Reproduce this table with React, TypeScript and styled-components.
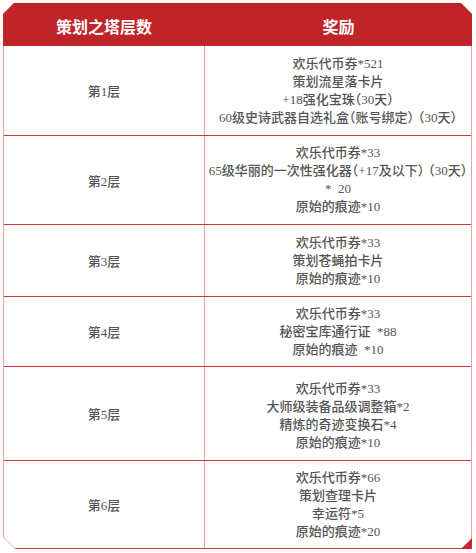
import React from 'react';
import styled, { createGlobalStyle } from 'styled-components';

const GlobalStyle = createGlobalStyle`
  html, body {
    margin: 0;
    padding: 0;
    background: #ffffff;
  }
`;

const Page = styled.div`
  padding: 3px 0 0 3px;
`;

const Frame = styled.div`
  position: relative;
  width: 469px;
  background: #e6a4a7;
  padding: 0 1px;
  box-sizing: border-box;
  clip-path: polygon(11px 0, calc(100% - 11px) 0, 100% 11px, 100% 100%, 12px 100%, 0 calc(100% - 12px), 0 11px);
  font-family: 'Liberation Serif', 'Noto Sans CJK SC', serif;

  &::after {
    content: '';
    position: absolute;
    right: 0;
    bottom: 0;
    width: 11px;
    height: 11px;
    background: #c8262c;
    clip-path: polygon(100% 0, 100% 100%, 0 100%);
  }
`;

const Header = styled.div`
  display: grid;
  grid-template-columns: 202px 1fr;
  height: 43px;
  margin: 0 -1px;
  background: #c02328;
  color: #ffffff;
  font-size: 16px;
  font-weight: 700;
  font-family: 'Noto Sans CJK SC', serif;
`;

const HeadCell = styled.div`
  display: flex;
  align-items: center;
  justify-content: center;
  padding-top: 2px;
`;

const Body = styled.div`
  background: #ffffff;
  clip-path: polygon(0 0, 100% 0, 100% 100%, 12px 100%, 0 calc(100% - 12px));
`;

const Row = styled.div<{ $h: number }>`
  display: grid;
  grid-template-columns: 201px 1fr;
  height: ${(p) => p.$h}px;
  border-bottom: 1px solid #d2363b;
`;

const FloorCell = styled.div`
  display: flex;
  align-items: center;
  justify-content: center;
  border-right: 1px solid #e6a4a7;
  color: #555555;
  font-size: 13px;
  font-weight: 500;
`;

const RewardCell = styled.div<{ $shift?: number }>`
  display: flex;
  flex-direction: column;
  align-items: center;
  justify-content: center;
  padding-top: ${(p) => p.$shift ?? 0}px;
  color: #555555;
  font-size: 13px;
  font-weight: 500;
  line-height: 18px;
  text-align: center;
  font-feature-settings: 'halt';
`;

const Line = styled.div`
  white-space: pre;
`;

const Gap = styled.span`
  display: inline-block;
  width: 4px;
`;

type Tier = { floor: string; h: number; shift?: number; rewards: React.ReactNode[] };

const tiers: Tier[] = [
  {
    floor: '第1层',
    h: 89,
    rewards: [
      '欢乐代币券*521',
      '策划流星落卡片',
      '+18强化宝珠（30天）',
      <>
        60级史诗武器自选礼盒（账号绑定）
        <Gap />
        （30天）
      </>,
    ],
  },
  {
    floor: '第2层',
    h: 88,
    rewards: [
      '欢乐代币券*33',
      <>
        65级华丽的一次性强化器（+17及以下）
        <Gap />
        （30天）
      </>,
      '*  20',
      '原始的痕迹*10',
    ],
  },
  { floor: '第3层', h: 71, rewards: ['欢乐代币券*33', '策划苍蝇拍卡片', '原始的痕迹*10'] },
  { floor: '第4层', h: 69, rewards: ['欢乐代币券*33', '秘密宝库通行证  *88', '原始的痕迹  *10'] },
  {
    floor: '第5层',
    h: 93,
    shift: 4,
    rewards: ['欢乐代币券*33', '大师级装备品级调整箱*2', '精炼的奇迹变换石*4', '原始的痕迹*10'],
  },
  { floor: '第6层', h: 87, rewards: ['欢乐代币券*66', '策划查理卡片', '幸运符*5', '原始的痕迹*20'] },
];

const App = () => {
  return (
    <Page>
      <GlobalStyle />
      <Frame>
        <Header>
          <HeadCell>策划之塔层数</HeadCell>
          <HeadCell>奖励</HeadCell>
        </Header>
        <Body>
          {tiers.map((t) => (
            <Row key={t.floor} $h={t.h}>
              <FloorCell>{t.floor}</FloorCell>
              <RewardCell $shift={t.shift}>
                {t.rewards.map((r, i) => (
                  <Line key={i}>{r}</Line>
                ))}
              </RewardCell>
            </Row>
          ))}
        </Body>
      </Frame>
    </Page>
  );
};

export default App;
